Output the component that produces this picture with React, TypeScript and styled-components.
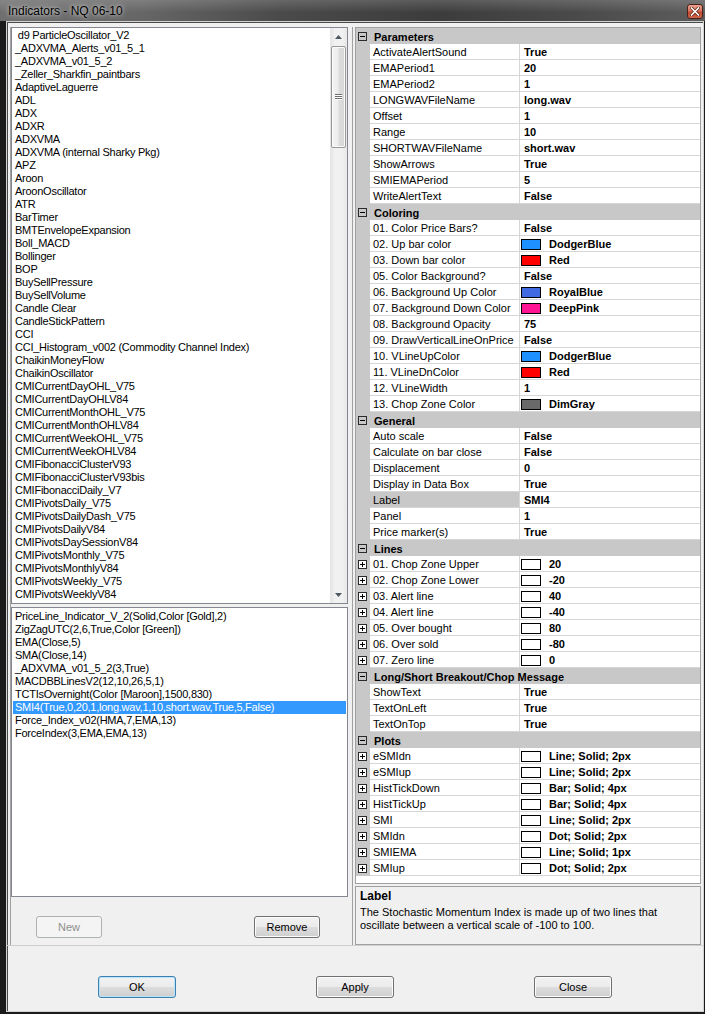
import React from "react";
import styled, { createGlobalStyle } from "styled-components";

const GlobalStyle = createGlobalStyle`
  html, body { margin: 0; padding: 0; background: #1a1a1a; }
  body { font-family: "Liberation Sans", Arial, sans-serif; font-size: 11px; color: #000; }
  * { box-sizing: border-box; }
`;

type Prop = {
  label: string;
  value: string;
  swatch?: string;
  expand?: boolean;
  selected?: boolean;
};

type Category = { name: string; rows: Prop[] };

const topItems = [
  " d9 ParticleOscillator_V2",
  "_ADXVMA_Alerts_v01_5_1",
  "_ADXVMA_v01_5_2",
  "_Zeller_Sharkfin_paintbars",
  "AdaptiveLaguerre",
  "ADL",
  "ADX",
  "ADXR",
  "ADXVMA",
  "ADXVMA (internal Sharky Pkg)",
  "APZ",
  "Aroon",
  "AroonOscillator",
  "ATR",
  "BarTimer",
  "BMTEnvelopeExpansion",
  "Boll_MACD",
  "Bollinger",
  "BOP",
  "BuySellPressure",
  "BuySellVolume",
  "Candle Clear",
  "CandleStickPattern",
  "CCI",
  "CCI_Histogram_v002 (Commodity Channel Index)",
  "ChaikinMoneyFlow",
  "ChaikinOscillator",
  "CMICurrentDayOHL_V75",
  "CMICurrentDayOHLV84",
  "CMICurrentMonthOHL_V75",
  "CMICurrentMonthOHLV84",
  "CMICurrentWeekOHL_V75",
  "CMICurrentWeekOHLV84",
  "CMIFibonacciClusterV93",
  "CMIFibonacciClusterV93bis",
  "CMIFibonacciDaily_V7",
  "CMIPivotsDaily_V75",
  "CMIPivotsDailyDash_V75",
  "CMIPivotsDailyV84",
  "CMIPivotsDaySessionV84",
  "CMIPivotsMonthly_V75",
  "CMIPivotsMonthlyV84",
  "CMIPivotsWeekly_V75",
  "CMIPivotsWeeklyV84",
];

const activeItems = [
  "PriceLine_Indicator_V_2(Solid,Color [Gold],2)",
  "ZigZagUTC(2,6,True,Color [Green])",
  "EMA(Close,5)",
  "SMA(Close,14)",
  "_ADXVMA_v01_5_2(3,True)",
  "MACDBBLinesV2(12,10,26,5,1)",
  "TCTIsOvernight(Color [Maroon],1500,830)",
  "SMI4(True,0,20,1,long.wav,1,10,short.wav,True,5,False)",
  "Force_Index_v02(HMA,7,EMA,13)",
  "ForceIndex(3,EMA,EMA,13)",
];
const selectedActive = 7;

const W = "#ffffff";

const categories: Category[] = [
  {
    name: "Parameters",
    rows: [
      { label: "ActivateAlertSound", value: "True" },
      { label: "EMAPeriod1", value: "20" },
      { label: "EMAPeriod2", value: "1" },
      { label: "LONGWAVFileName", value: "long.wav" },
      { label: "Offset", value: "1" },
      { label: "Range", value: "10" },
      { label: "SHORTWAVFileName", value: "short.wav" },
      { label: "ShowArrows", value: "True" },
      { label: "SMIEMAPeriod", value: "5" },
      { label: "WriteAlertText", value: "False" },
    ],
  },
  {
    name: "Coloring",
    rows: [
      { label: "01. Color Price Bars?", value: "False" },
      { label: "02. Up bar color", value: "DodgerBlue", swatch: "#1e90ff" },
      { label: "03. Down bar color", value: "Red", swatch: "#ff0000" },
      { label: "05. Color Background?", value: "False" },
      { label: "06. Background Up Color", value: "RoyalBlue", swatch: "#4169e1" },
      { label: "07. Background Down Color", value: "DeepPink", swatch: "#ff1493" },
      { label: "08. Background Opacity", value: "75" },
      { label: "09. DrawVerticalLineOnPrice", value: "False" },
      { label: "10. VLineUpColor", value: "DodgerBlue", swatch: "#1e90ff" },
      { label: "11. VLineDnColor", value: "Red", swatch: "#ff0000" },
      { label: "12. VLineWidth", value: "1" },
      { label: "13. Chop Zone Color", value: "DimGray", swatch: "#696969" },
    ],
  },
  {
    name: "General",
    rows: [
      { label: "Auto scale", value: "False" },
      { label: "Calculate on bar close", value: "False" },
      { label: "Displacement", value: "0" },
      { label: "Display in Data Box", value: "True" },
      { label: "Label", value: "SMI4", selected: true },
      { label: "Panel", value: "1" },
      { label: "Price marker(s)", value: "True" },
    ],
  },
  {
    name: "Lines",
    rows: [
      { label: "01. Chop Zone Upper", value: "20", swatch: W, expand: true },
      { label: "02. Chop Zone Lower", value: "-20", swatch: W, expand: true },
      { label: "03. Alert line", value: "40", swatch: W, expand: true },
      { label: "04. Alert line", value: "-40", swatch: W, expand: true },
      { label: "05. Over bought", value: "80", swatch: W, expand: true },
      { label: "06. Over sold", value: "-80", swatch: W, expand: true },
      { label: "07. Zero line", value: "0", swatch: W, expand: true },
    ],
  },
  {
    name: "Long/Short Breakout/Chop Message",
    rows: [
      { label: "ShowText", value: "True" },
      { label: "TextOnLeft", value: "True" },
      { label: "TextOnTop", value: "True" },
    ],
  },
  {
    name: "Plots",
    rows: [
      { label: "eSMIdn", value: "Line; Solid; 2px", swatch: W, expand: true },
      { label: "eSMIup", value: "Line; Solid; 2px", swatch: W, expand: true },
      { label: "HistTickDown", value: "Bar; Solid; 4px", swatch: W, expand: true },
      { label: "HistTickUp", value: "Bar; Solid; 4px", swatch: W, expand: true },
      { label: "SMI", value: "Line; Solid; 2px", swatch: W, expand: true },
      { label: "SMIdn", value: "Dot; Solid; 2px", swatch: W, expand: true },
      { label: "SMIEMA", value: "Line; Solid; 1px", swatch: W, expand: true },
      { label: "SMIup", value: "Dot; Solid; 2px", swatch: W, expand: true },
    ],
  },
];

/* window chrome */

const Frame = styled.div`
  width: 705px;
  height: 1014px;
  display: flex;
  flex-direction: column;
  background: #1b1b1b;
  overflow: hidden;
`;

const TitleBar = styled.div`
  height: 21px;
  flex: none;
  display: flex;
  justify-content: space-between;
  align-items: flex-start;
  background: linear-gradient(to bottom, rgba(255, 255, 255, 0.16), rgba(255, 255, 255, 0) 60%),
    linear-gradient(to right, #6f6f6f 0%, #666 20%, #4a4a4a 40%, #3c3c3c 62%, #4a4a4a 82%, #5d5d5d 100%);
`;

const Title = styled.span`
  padding-left: 8px;
  line-height: 23px;
  font-size: 12px;
  color: #000;
  text-shadow: 0 0 6px rgba(255, 255, 255, 0.75), 0 0 3px rgba(255, 255, 255, 0.5);
`;

const CloseButton = styled.div`
  width: 16px;
  height: 15px;
  margin: 4px 2px 0 0;
  border: 1px solid #4a2219;
  border-radius: 3px;
  background: linear-gradient(to bottom, #eba393 0%, #d9745f 45%, #c04a30 55%, #d0654b 100%);
  display: flex;
  align-items: center;
  justify-content: center;
`;

const ClientWrap = styled.div`
  flex: 1;
  padding: 0 1px 2px 6px;
  display: flex;
  min-height: 0;
`;

const Client = styled.div`
  flex: 1;
  min-width: 0;
  display: flex;
  flex-direction: column;
  background: #f0f0f0;
  border: 1px solid #d2d2d2;
  box-shadow: inset 1px 1px 0 #4a4a4a;
`;

const MainArea = styled.div`
  height: 924px;
  flex: none;
  display: flex;
  padding: 5px 0 0 3px;
  border-bottom: 1px solid #cfcfcf;
`;

/* left side */

const LeftPane = styled.div`
  width: 343px;
  flex: none;
  display: flex;
  flex-direction: column;
  padding-right: 4px;
  border-left: 1px solid #a0a0a0;
  border-right: 1px solid #a0a0a0;
`;

const ListBox = styled.div<{ $height: number; $gapTop?: number }>`
  height: ${(p) => p.$height}px;
  margin-top: ${(p) => p.$gapTop ?? 0}px;
  flex: none;
  display: flex;
  background: #fff;
  border: 1px solid #828790;
  overflow: hidden;
`;

const ListItems = styled.div<{ $padTop: number }>`
  flex: 1;
  min-width: 0;
  padding-top: ${(p) => p.$padTop}px;
`;

const ListItem = styled.div<{ $selected?: boolean }>`
  height: 13px;
  line-height: 13px;
  letter-spacing: -0.25px;
  white-space: pre;
  overflow: hidden;
  padding-left: ${(p) => (p.$selected ? 2 : 3)}px;
  margin: 0 ${(p) => (p.$selected ? 1 : 0)}px;
  background: ${(p) => (p.$selected ? "#3399ff" : "transparent")};
  color: ${(p) => (p.$selected ? "#fff" : "#000")};
`;

const ScrollBar = styled.div`
  width: 17px;
  flex: none;
  display: flex;
  flex-direction: column;
  background: linear-gradient(to right, #e4e4e4, #f1f1f1 30%, #f1f1f1 70%, #e8e8e8);
`;

const ScrollArrow = styled.div`
  height: 17px;
  flex: none;
  display: flex;
  align-items: center;
  justify-content: center;
`;

const ScrollThumb = styled.div`
  height: 102px;
  margin: 1px 1px 0 1px;
  flex: none;
  border: 1px solid #979797;
  border-radius: 2px;
  background: linear-gradient(to right, #f5f5f5 0%, #ececec 45%, #dcdcdc 55%, #d6d6d6 100%);
  box-shadow: inset 0 0 0 1px #fbfbfb;
  display: flex;
  align-items: center;
  justify-content: center;
`;

const ScrollTrackRest = styled.div`
  flex: 1;
`;

const ButtonRow = styled.div`
  flex: 1;
  display: flex;
  justify-content: space-between;
  align-items: flex-start;
  padding: 19px 28px 0 25px;
`;

const Button = styled.button<{ $width: number; $primary?: boolean }>`
  width: ${(p) => p.$width}px;
  height: 22px;
  flex: none;
  padding: 0;
  font-family: "Liberation Sans", Arial, sans-serif;
  font-size: 11px;
  color: #000;
  border-radius: 3px;
  border: 1px solid ${(p) => (p.$primary ? "#3c7fb1" : "#707070")};
  background: linear-gradient(to bottom, #f2f2f2 0%, #ebebeb 49%, #dddddd 50%, #cfcfcf 100%);
  box-shadow: inset 0 0 0 1px ${(p) => (p.$primary ? "#b8e3f8" : "#fcfcfc")};

  &:disabled {
    color: #8f8f8f;
    border-color: #adb2b5;
    background: #f4f4f4;
    box-shadow: none;
  }
`;

/* right side */

const RightPane = styled.div`
  flex: 1;
  min-width: 0;
  display: flex;
  flex-direction: column;
  padding: 0 2px 0 2px;
`;

const Grid = styled.div`
  height: 857px;
  flex: none;
  background: #fff;
  border: 1px solid #a0a0a0;
  overflow: hidden;
`;

const CategoryRow = styled.div`
  height: 16px;
  display: flex;
  align-items: center;
  padding-left: 2px;
  background: #c8c8c8;
  font-weight: bold;
  white-space: nowrap;
`;

const CategoryName = styled.span`
  margin-left: 7px;
  line-height: 16px;
  padding-top: 1px;
`;

const PropRow = styled.div`
  height: 16px;
  display: grid;
  grid-template-columns: 14px 150px minmax(0, 1fr);
`;

const Margin = styled.div`
  background: #c8c8c8;
  display: flex;
  align-items: center;
  padding-left: 2px;
`;

const LabelCell = styled.div<{ $selected?: boolean }>`
  padding: 1px 0 0 3px;
  line-height: 14px;
  white-space: nowrap;
  overflow: hidden;
  background: ${(p) => (p.$selected ? "#c8c8c8" : "#fff")};
  border-bottom: 1px solid #d6d6d6;
  border-right: 1px solid #d6d6d6;
`;

const ValueCell = styled.div<{ $swatch?: boolean }>`
  display: flex;
  align-items: center;
  padding: 1px 0 0 ${(p) => (p.$swatch ? 1 : 4)}px;
  line-height: 14px;
  font-weight: bold;
  white-space: nowrap;
  overflow: hidden;
  border-bottom: 1px solid #d6d6d6;
`;

const Swatch = styled.span<{ $color: string }>`
  width: 20px;
  height: 11px;
  flex: none;
  margin-right: 8px;
  border: 1px solid #000;
  background: ${(p) => p.$color};
`;

const Description = styled.div`
  height: 59px;
  margin-top: 2px;
  flex: none;
  padding: 3px 4px 0 4px;
  background: #f0f0f0;
  border: 1px solid #a0a0a0;
`;

const DescTitle = styled.div`
  font-size: 12px;
  font-weight: bold;
  line-height: 13px;
  margin-bottom: 3px;
`;

const DescText = styled.div`
  line-height: 13px;
`;

/* footer */

const Footer = styled.div`
  flex: 1;
  display: flex;
  align-items: flex-start;
  gap: 140px;
  padding: 30px 0 0 91px;
`;

const SizeGrip = styled.div`
  margin-left: auto;
  align-self: flex-end;
  width: 10px;
  height: 10px;
  margin-bottom: 1px;
`;

const ExpandBox = ({ open, fill }: { open: boolean; fill: string }) => (
  <svg width="9" height="9" viewBox="0 0 9 9" style={{ display: "block" }}>
    <rect x="0.5" y="0.5" width="8" height="8" fill={fill} stroke="#2b2b2b" />
    <line x1="2" y1="4.5" x2="7" y2="4.5" stroke="#000" />
    {!open && <line x1="4.5" y1="2" x2="4.5" y2="7" stroke="#000" />}
  </svg>
);

const Arrow = ({ up }: { up: boolean }) => (
  <svg width="7" height="4" viewBox="0 0 7 4">
    <path d={up ? "M0 4 L3.5 0 L7 4 Z" : "M0 0 L3.5 4 L7 0 Z"} fill="#4d5a63" />
  </svg>
);

const Grip = () => (
  <svg width="7" height="6" viewBox="0 0 7 6">
    {[0.5, 2.5, 4.5].map((y) => (
      <g key={y}>
        <line x1="0" y1={y} x2="7" y2={y} stroke="#6d6d6d" />
        <line x1="0" y1={y + 1} x2="7" y2={y + 1} stroke="#ffffff" />
      </g>
    ))}
  </svg>
);

const GripDots = () => (
  <svg width="10" height="10" viewBox="0 0 10 10">
    {[
      [8, 2],
      [5, 5],
      [8, 5],
      [2, 8],
      [5, 8],
      [8, 8],
    ].map(([x, y]) => (
      <g key={`${x}-${y}`}>
        <rect x={x + 1} y={y + 1} width="1" height="1" fill="#fff" />
        <rect x={x} y={y} width="1" height="1" fill="#a8a8a8" />
      </g>
    ))}
  </svg>
);

const CloseGlyph = () => (
  <svg width="10" height="9" viewBox="0 0 10 9">
    <path d="M1.5 1 L8.5 8 M8.5 1 L1.5 8" stroke="#5a1d12" strokeWidth="3" strokeLinecap="square" />
    <path d="M1.5 1 L8.5 8 M8.5 1 L1.5 8" stroke="#ffffff" strokeWidth="1.6" strokeLinecap="square" />
  </svg>
);

export default function App() {
  return (
    <>
      <GlobalStyle />
      <Frame>
        <TitleBar>
          <Title>Indicators - NQ 06-10</Title>
          <CloseButton>
            <CloseGlyph />
          </CloseButton>
        </TitleBar>
        <ClientWrap>
          <Client>
            <MainArea>
              <LeftPane>
                <ListBox $height={577}>
                  <ListItems $padTop={1}>
                    {topItems.map((t) => (
                      <ListItem key={t}>{t}</ListItem>
                    ))}
                  </ListItems>
                  <ScrollBar>
                    <ScrollArrow>
                      <Arrow up />
                    </ScrollArrow>
                    <ScrollThumb>
                      <Grip />
                    </ScrollThumb>
                    <ScrollTrackRest />
                    <ScrollArrow>
                      <Arrow up={false} />
                    </ScrollArrow>
                  </ScrollBar>
                </ListBox>
                <ListBox $height={290} $gapTop={3}>
                  <ListItems $padTop={2}>
                    {activeItems.map((t, i) => (
                      <ListItem key={t} $selected={i === selectedActive}>
                        {t}
                      </ListItem>
                    ))}
                  </ListItems>
                </ListBox>
                <ButtonRow>
                  <Button $width={66} disabled>
                    New
                  </Button>
                  <Button $width={66}>Remove</Button>
                </ButtonRow>
              </LeftPane>
              <RightPane>
                <Grid>
                  {categories.map((c) => (
                    <React.Fragment key={c.name}>
                      <CategoryRow>
                        <ExpandBox open fill="#c8c8c8" />
                        <CategoryName>{c.name}</CategoryName>
                      </CategoryRow>
                      {c.rows.map((r) => (
                        <PropRow key={r.label}>
                          <Margin>{r.expand && <ExpandBox open={false} fill="#fff" />}</Margin>
                          <LabelCell $selected={r.selected}>{r.label}</LabelCell>
                          <ValueCell $swatch={!!r.swatch}>
                            {r.swatch && <Swatch $color={r.swatch} />}
                            {r.value}
                          </ValueCell>
                        </PropRow>
                      ))}
                    </React.Fragment>
                  ))}
                </Grid>
                <Description>
                  <DescTitle>Label</DescTitle>
                  <DescText>
                    The Stochastic Momentum Index is made up of two lines that oscillate between a vertical scale of
                    -100 to 100.
                  </DescText>
                </Description>
              </RightPane>
            </MainArea>
            <Footer>
              <Button $width={78} $primary>
                OK
              </Button>
              <Button $width={78}>Apply</Button>
              <Button $width={78}>Close</Button>
              <SizeGrip>
                <GripDots />
              </SizeGrip>
            </Footer>
          </Client>
        </ClientWrap>
      </Frame>
    </>
  );
}
